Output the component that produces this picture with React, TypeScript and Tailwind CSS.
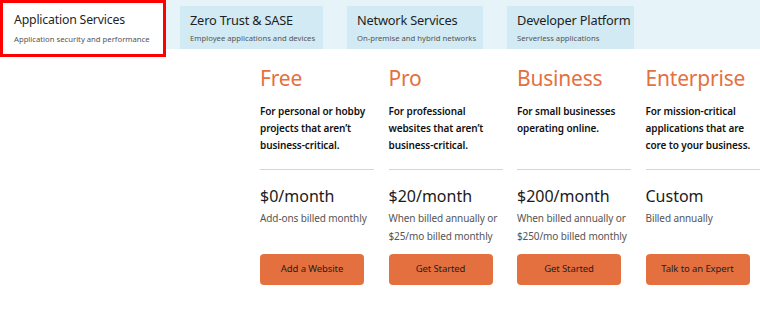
import React from 'react';

interface Plan {
  name: string;
  blurb: string[];
  price: string;
  note: string[];
  cta: string;
}

const TABS = [
  { title: 'Zero Trust & SASE', sub: 'Employee applications and devices', w: 'w-[143px]' },
  { title: 'Network Services', sub: 'On-premise and hybrid networks', w: 'w-[136px]' },
  { title: 'Developer Platform', sub: 'Serverless applications', w: 'w-[127px]' },
];

const PLANS: Plan[] = [
  {
    name: 'Free',
    blurb: ['For personal or hobby', 'projects that aren’t', 'business-critical.'],
    price: '$0/month',
    note: ['Add-ons billed monthly'],
    cta: 'Add a Website',
  },
  {
    name: 'Pro',
    blurb: ['For professional', 'websites that aren’t', 'business-critical.'],
    price: '$20/month',
    note: ['When billed annually or', '$25/mo billed monthly'],
    cta: 'Get Started',
  },
  {
    name: 'Business',
    blurb: ['For small businesses', 'operating online.'],
    price: '$200/month',
    note: ['When billed annually or', '$250/mo billed monthly'],
    cta: 'Get Started',
  },
  {
    name: 'Enterprise',
    blurb: ['For mission-critical', 'applications that are', 'core to your business.'],
    price: 'Custom',
    note: ['Billed annually'],
    cta: 'Talk to an Expert',
  },
];

const FONT = 'font-["Noto_Sans","Open_Sans",sans-serif]';

export default function App() {
  return (
    <div className={`w-[760px] h-[311px] overflow-hidden bg-white text-[#222] ${FONT}`}>
      {/* Tabs strip */}
      <div className="flex h-[49px] bg-[#e6f3f9]">
        <div className="relative z-10 w-[166px] h-[57px] shrink-0 bg-white border-[3px] border-[#ff0000] pl-[11px] pt-[8px]">
          <div className="text-[12.3px] leading-[18px] text-[#1f1f1f] tracking-[-0.2px] whitespace-nowrap">Application Services</div>
          <div className="mt-[4px] text-[7.7px] leading-[12px] text-[#555] whitespace-nowrap">
            Application security and performance
          </div>
        </div>
        <div className="flex gap-[24px] ml-[14px] mt-[6px]">
          {TABS.map((t) => (
            <div key={t.title} className={`${t.w} h-[43px] bg-[#d1eaf4] pl-[10px] pt-[5px]`}>
              <div className="text-[12.8px] leading-[18px] text-[#1f1f1f] tracking-[-0.2px] whitespace-nowrap">{t.title}</div>
              <div className="mt-[3px] text-[7.7px] leading-[12px] text-[#555] whitespace-nowrap">{t.sub}</div>
            </div>
          ))}
        </div>
      </div>

      {/* Plans */}
      <div className="flex gap-[14.5px] pl-[260px] pt-[14px]">
        {PLANS.map((p) => (
          <div key={p.name} className="w-[114px] shrink-0 flex flex-col">
            <div className="text-[21px] leading-[30px] text-[#e5703f] tracking-[-0.2px] whitespace-nowrap">{p.name}</div>
            <div className="mt-[10px] h-[51px] text-[10px] leading-[17px] font-semibold text-[#111] tracking-[-0.1px]">
              {p.blurb.map((l) => (
                <div key={l} className="whitespace-nowrap">{l}</div>
              ))}
            </div>
            <div className="mt-[15px] h-px bg-[#d5d5d5]" />
            <div className="mt-[15px] text-[16px] leading-[22px] text-[#1a1a1a] whitespace-nowrap">{p.price}</div>
            <div className="mt-[2px] h-[36px] text-[10px] leading-[18px] text-[#555] tracking-[-0.1px]">
              {p.note.map((l) => (
                <div key={l} className="whitespace-nowrap">{l}</div>
              ))}
            </div>
            <button className="mt-[9px] w-[104px] h-[31px] rounded-[4px] bg-[#e5703f] text-[9.5px] text-[#222] tracking-[-0.1px]">
              {p.cta}
            </button>
          </div>
        ))}
      </div>
    </div>
  );
}
